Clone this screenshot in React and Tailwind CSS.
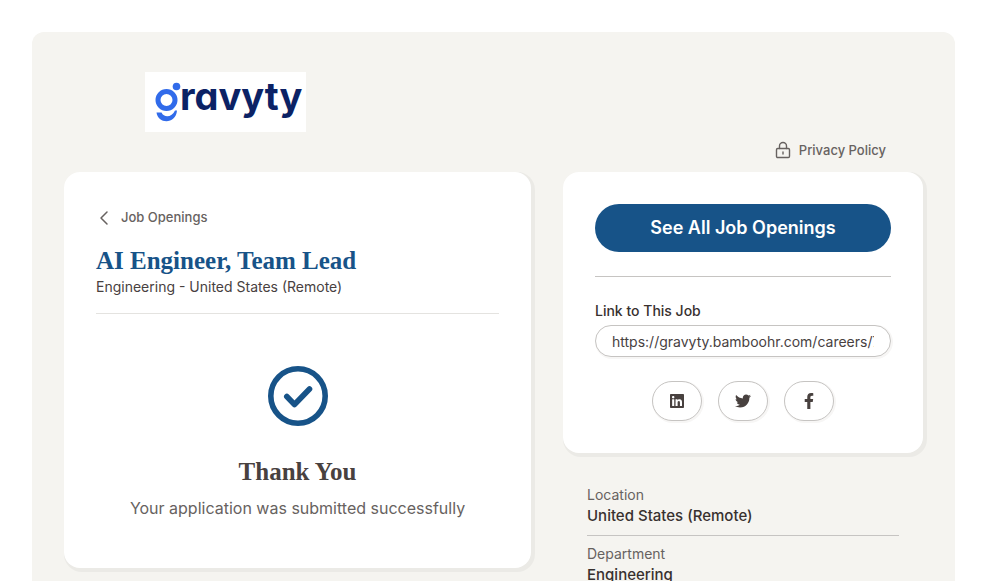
import React from 'react';
import { FaLinkedin, FaTwitter, FaFacebookF } from 'react-icons/fa';

const shareLinks = [
  { name: 'LinkedIn', icon: FaLinkedin },
  { name: 'Twitter', icon: FaTwitter },
  { name: 'Facebook', icon: FaFacebookF },
];

const details = [
  { label: 'Location', value: 'United States (Remote)' },
  { label: 'Department', value: 'Engineering' },
];

const Logo = () => (
  <svg width="161" height="60" viewBox="0 0 161 60" role="img" aria-label="gravyty" className="bg-white">
    <circle cx="21.5" cy="28" r="8.5" fill="none" stroke="#316bea" strokeWidth="5" />
    <circle cx="31.5" cy="14.5" r="3.8" fill="#316bea" />
    <path d="M11.5 40.5 C13 52.500 31 52.500 32 38.500 L30 38.500 C27 45.500 19 46 16.500 40.5 Z" fill="#316bea" />
    <text
      x="35"
      y="38"
      fill="#0b2265"
      className="font-['Inter'] text-[38px] font-bold [font-feature-settings:'cv11']"
    >
      ravyty
    </text>
  </svg>
);

const LockIcon = () => (
  <svg width="16" height="18" viewBox="0 0 16 18" fill="none" stroke="currentColor" strokeWidth="1.4" strokeLinecap="round" strokeLinejoin="round">
    <rect x="1.500" y="7.500" width="13" height="9" rx="1.200" />
    <path d="M4.500 7.500V5a3.500 3.500 0 0 1 7 0V7.500M8 11v2" />
  </svg>
);

const App = () => {
  return (
    <div className="min-h-screen bg-white p-8 font-['Inter',sans-serif] text-[#38312f]">
      <main className="rounded-xl bg-[#f5f4f0] px-8 pt-10 pb-16">
        {/* Header */}
        <header>
          <a href="#home" className="ml-[81px] inline-block align-top">
            <Logo />
          </a>
          <div className="flex justify-end pt-2 pr-[37px] pb-3">
            <a href="#privacy" className="flex items-center gap-2 text-[13px] leading-5 font-medium text-[#676260]">
              <LockIcon />
              Privacy Policy
            </a>
          </div>
        </header>

        <div className="flex items-start gap-8">
          {/* Confirmation */}
          <section className="min-w-0 flex-1 rounded-2xl bg-white px-8 pt-8 pb-12 shadow-[2px_2px_0_2px_#ebeae6]">
            <a href="#jobs" className="flex h-7 items-center gap-2 text-[13px] font-medium text-[#676260]">
              <svg width="17" height="16" viewBox="0 0 17 16" fill="none" stroke="currentColor" strokeWidth="1.5" strokeLinecap="round" strokeLinejoin="round">
                <path d="M11 2L5 8l6 6" />
              </svg>
              Job Openings
            </a>
            <div className="border-b border-[#e4e3e0] pt-3 pb-4">
              <h1 className="font-['Liberation_Serif',serif] text-[25px] leading-[33px] font-bold text-[#175388]">
                AI Engineer, Team Lead
              </h1>
              <p className="text-sm text-[#48413f]">Engineering - United States (Remote)</p>
            </div>
            <div className="flex flex-col items-center pt-13 text-center">
              <svg width="60" height="60" viewBox="0 0 60 60" fill="none" stroke="#175388" strokeLinecap="round" strokeLinejoin="round">
                <circle cx="30" cy="30" r="27.200" strokeWidth="5.600" />
                <path d="M18.800 30.500l7.700 8L41.500 23" strokeWidth="5.600" />
              </svg>
              <h2 className="mt-[29px] font-['Liberation_Serif',serif] text-[25px] leading-[33px] font-bold text-[#48413f]">
                Thank You
              </h2>
              <p className="mt-2 text-base text-[#676260]">Your application was submitted successfully</p>
            </div>
          </section>

          {/* Sidebar */}
          <aside className="w-[360px] shrink-0">
            <div className="rounded-2xl bg-white p-8 shadow-[2px_2px_0_2px_#ebeae6]">
              <button type="button" className="h-12 w-full rounded-full bg-[#175388] text-lg font-semibold text-white">
                See All Job Openings
              </button>
              <div className="mt-6 border-t border-[#c6c4c2] pt-6">
                <label htmlFor="job-link" className="block text-sm font-medium">
                  Link to This Job
                </label>
                <input
                  id="job-link"
                  type="text"
                  readOnly
                  value="https://gravyty.bamboohr.com/careers/77"
                  className="mt-1 block h-8 w-full rounded-full border border-[#c6c4c2] bg-white px-4 text-sm text-[#48413f] shadow-[1px_1px_0_1px_#f7f6f5] outline-none"
                />
              </div>
              <div className="mt-6 flex justify-center gap-4">
                {shareLinks.map(({ name, icon: Icon }) => (
                  <button
                    key={name}
                    type="button"
                    aria-label={`Share on ${name}`}
                    className="flex h-10 w-[50px] items-center justify-center rounded-full border border-[#c6c4c2] bg-white text-[#48413f] shadow-[1px_1px_0_1px_#f7f6f5]"
                  >
                    <Icon size={16} />
                  </button>
                ))}
              </div>
            </div>

            <dl className="px-6 pt-6">
              {details.map(({ label, value }) => (
                <div key={label} className="border-b border-[#c6c4c2] py-2">
                  <dt className="text-sm text-[#676260]">{label}</dt>
                  <dd className="text-[15px] leading-[22px] font-medium">{value}</dd>
                </div>
              ))}
            </dl>
          </aside>
        </div>
      </main>
    </div>
  );
};

export default App;
